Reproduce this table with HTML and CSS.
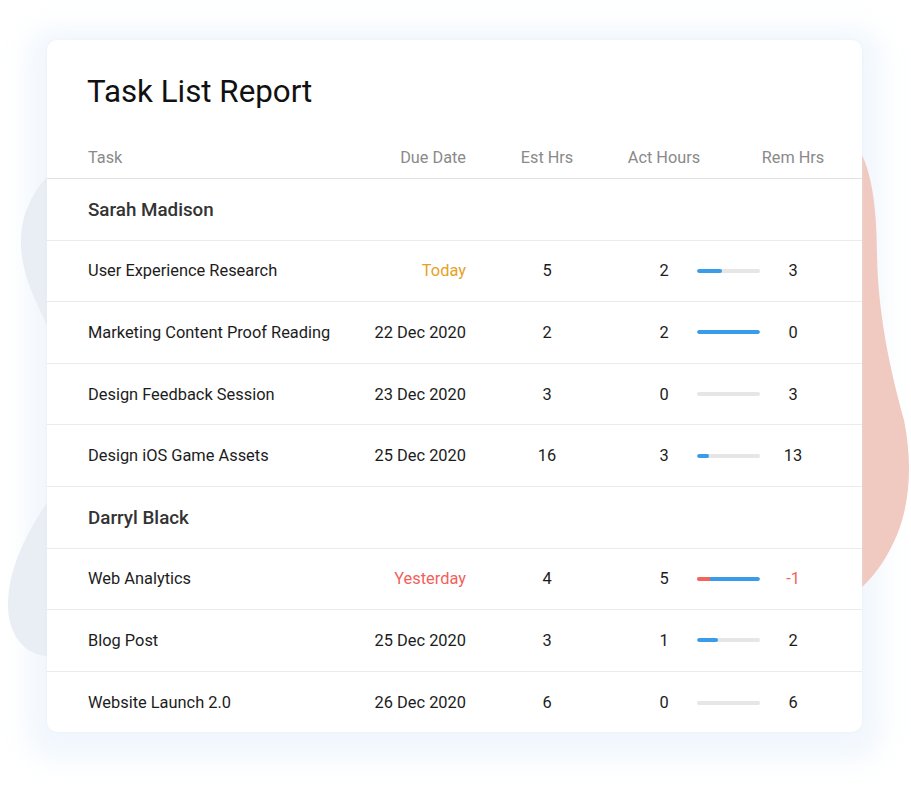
FILE: index.html
```html
<!DOCTYPE html>
<html lang="en">
<head>
<meta charset="utf-8">
<title>Task List Report</title>
<link rel="stylesheet" href="styles.css">
</head>
<body>
<div class="stage">
  <div class="glow" aria-hidden="true"></div>
  <svg class="blobs" width="911" height="786" viewBox="0 0 911 786" aria-hidden="true">
    <path fill="#e9edf4" d="M60 170 L47 177 C30 195 20 220 21 245 C22 275 35 300 47 325 L60 330 Z"/>
    <path fill="#e9edf4" d="M60 495 L47 503 C25 535 8 570 8 605 C8 635 25 655 47 656 L60 656 Z"/>
    <path fill="#f0c9c1" d="M850 150 L862 155 C873 178 877 215 877 255 C878 320 893 380 904 420 C912 460 911 500 897 535 C887 558 876 574 862 587 L850 587 Z"/>
  </svg>
  <div class="card">
    <h1 class="title">Task List Report</h1>
    <div class="grid head">
      <div class="c-task">Task</div>
      <div class="c-due">Due Date</div>
      <div class="c-est">Est Hrs</div>
      <div class="c-act">Act Hours</div>
      <div class="c-bar"></div>
      <div class="c-rem">Rem Hrs</div>
    </div>

    <div class="row group"><div class="c-task">Sarah Madison</div></div>

    <div class="grid row">
      <div class="c-task">User Experience Research</div>
      <div class="c-due today">Today</div>
      <div class="c-est">5</div>
      <div class="c-act">2</div>
      <div class="c-bar"><div class="track"><div class="fill" style="width:40%"></div></div></div>
      <div class="c-rem">3</div>
    </div>
    <div class="grid row">
      <div class="c-task">Marketing Content Proof Reading</div>
      <div class="c-due">22 Dec 2020</div>
      <div class="c-est">2</div>
      <div class="c-act">2</div>
      <div class="c-bar"><div class="track"><div class="fill" style="width:100%"></div></div></div>
      <div class="c-rem">0</div>
    </div>
    <div class="grid row">
      <div class="c-task">Design Feedback Session</div>
      <div class="c-due">23 Dec 2020</div>
      <div class="c-est">3</div>
      <div class="c-act">0</div>
      <div class="c-bar"><div class="track"></div></div>
      <div class="c-rem">3</div>
    </div>
    <div class="grid row">
      <div class="c-task">Design iOS Game Assets</div>
      <div class="c-due">25 Dec 2020</div>
      <div class="c-est">16</div>
      <div class="c-act">3</div>
      <div class="c-bar"><div class="track"><div class="fill" style="width:19%"></div></div></div>
      <div class="c-rem">13</div>
    </div>

    <div class="row group"><div class="c-task">Darryl Black</div></div>

    <div class="grid row">
      <div class="c-task">Web Analytics</div>
      <div class="c-due late">Yesterday</div>
      <div class="c-est">4</div>
      <div class="c-act">5</div>
      <div class="c-bar"><div class="track"><div class="over" style="width:20%"></div><div class="fill" style="width:80%"></div></div></div>
      <div class="c-rem late">-1</div>
    </div>
    <div class="grid row">
      <div class="c-task">Blog Post</div>
      <div class="c-due">25 Dec 2020</div>
      <div class="c-est">3</div>
      <div class="c-act">1</div>
      <div class="c-bar"><div class="track"><div class="fill" style="width:34%"></div></div></div>
      <div class="c-rem">2</div>
    </div>
    <div class="grid row last">
      <div class="c-task">Website Launch 2.0</div>
      <div class="c-due">26 Dec 2020</div>
      <div class="c-est">6</div>
      <div class="c-act">0</div>
      <div class="c-bar"><div class="track"></div></div>
      <div class="c-rem">6</div>
    </div>
  </div>
</div>
</body>
</html>
```

FILE: styles.css
```css
* { box-sizing: border-box; }

html, body {
  margin: 0;
  padding: 0;
  background: #ffffff;
}

body {
  font-family: Roboto, "Noto Sans", Arial, sans-serif;
  width: 911px;
  height: 786px;
  overflow: hidden;
}

.stage {
  position: relative;
  width: 911px;
  height: 786px;
  padding: 40px 0 0 47px;
}

.glow {
  position: absolute;
  left: 47px;
  top: 40px;
  width: 815px;
  height: 692px;
  border-radius: 10px;
  background: #f3f8fd;
  box-shadow: 0 8px 26px 20px rgba(240, 246, 253, 0.9);
  z-index: 0;
}

.blobs {
  position: absolute;
  left: 0;
  top: 0;
  z-index: 1;
}

.card {
  position: relative;
  z-index: 2;
  width: 815px;
  height: 692px;
  background: #ffffff;
  border-radius: 10px;
  box-shadow: 0 0 3px rgba(225, 235, 248, 0.6);
  padding-top: 34px;
  overflow: hidden;
}

.title {
  margin: 0;
  padding-left: 40px;
  font-size: 31.3px;
  line-height: 36px;
  font-weight: 400;
  color: #111111;
}

.grid {
  display: grid;
  grid-template-columns: 278px 100px 162px 69px 63px 66px;
  align-items: center;
  padding-left: 41px;
  padding-right: 36px;
}

.head {
  padding-top: 38px;
  padding-bottom: 10px;
  line-height: 20px;
  font-size: 16.3px;
  color: #8a8a8a;
  border-bottom: 1px solid #e2e2e2;
}

.row {
  height: 61.6px;
  font-size: 16.4px;
  color: #1c1c1c;
  border-bottom: 1px solid #ebebeb;
}

.row.last { border-bottom: none; }

.group {
  display: flex;
  align-items: center;
  padding-left: 41px;
  padding-top: 2px;
  font-size: 18.8px;
  font-weight: 500;
  color: #333333;
}

.c-task { white-space: nowrap; }

.c-due {
  text-align: right;
  white-space: nowrap;
}

.c-est, .c-rem {
  display: flex;
  justify-content: center;
  white-space: nowrap;
}

.c-act {
  display: flex;
  justify-content: center;
  padding-left: 3px;
  white-space: nowrap;
}

.c-bar {
  display: flex;
  align-items: center;
}

.track {
  display: flex;
  width: 63px;
  height: 4px;
  border-radius: 2px;
  background: #e6e6e6;
  overflow: hidden;
}

.fill {
  height: 4px;
  background: #3a9be8;
  border-radius: 2px;
}

.over {
  height: 4px;
  background: #f2645c;
}

.over + .fill { border-radius: 0 2px 2px 0; }

.today { color: #e6a21f; }
.late { color: #f25f5c; }
```
